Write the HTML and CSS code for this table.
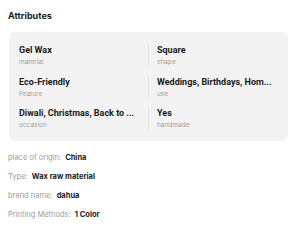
FILE: index.html
```html
<!DOCTYPE html>
<html lang="en">
<head>
    <meta charset="UTF-8">
    <meta name="viewport" content="width=device-width, initial-scale=1.0">
    <title>Attributes</title>
    <link rel="stylesheet" href="styles.css">
</head>
<body>
    <h2 class="section-title">Attributes</h2>

    <div class="attr-card">
        <div class="attr-item">
            <div class="attr-value">Gel Wax</div>
            <div class="attr-name">material</div>
        </div>
        <div class="attr-item split">
            <div class="attr-value">Square</div>
            <div class="attr-name">shape</div>
        </div>
        <div class="attr-item">
            <div class="attr-value">Eco-Friendly</div>
            <div class="attr-name">Feature</div>
        </div>
        <div class="attr-item split">
            <div class="attr-value">Weddings, Birthdays, Hom...</div>
            <div class="attr-name">use</div>
        </div>
        <div class="attr-item">
            <div class="attr-value">Diwali, Christmas, Back to ...</div>
            <div class="attr-name">occasion</div>
        </div>
        <div class="attr-item split">
            <div class="attr-value">Yes</div>
            <div class="attr-name">handmade</div>
        </div>
    </div>

    <ul class="spec-list">
        <li><span class="spec-key">place of origin:</span> <span class="spec-val">China</span></li>
        <li><span class="spec-key">Type:</span> <span class="spec-val">Wax raw material</span></li>
        <li><span class="spec-key">brand name:</span> <span class="spec-val">dahua</span></li>
        <li><span class="spec-key">Printing Methods:</span> <span class="spec-val">1 Color</span></li>
    </ul>
</body>
</html>
```

FILE: styles.css
```css
body {
    font-family: Inter, "Noto Sans", sans-serif;
    margin: 0;
    padding: 10px 12px 0 8px;
    background-color: #fff;
    color: #1a1a1a;
}

.section-title {
    font-size: 9px;
    font-weight: 700;
    margin: 0 0 10px;
    line-height: 12px;
}

.attr-card {
    background-color: #f3f3f3;
    border-radius: 6px;
    padding: 12px 10px 12px 10px;
    display: grid;
    grid-template-columns: 119px 1fr;
    column-gap: 10px;
    row-gap: 9.5px;
    margin-left: 1px;
}

.attr-item {
    min-width: 0;
}

.attr-item.split {
    border-left: 1px solid #e4e4e4;
    padding-left: 8px;
}

/* values use a narrower face so long strings fit their column */
.attr-value {
    font-family: Roboto, "Noto Sans", sans-serif;
    font-size: 9px;
    font-weight: 700;
    line-height: 12px;
    white-space: nowrap;
}

.attr-name {
    font-size: 6.5px;
    color: #9d9d9d;
    line-height: 8px;
    margin-top: 2px;
}

.spec-list {
    list-style: none;
    margin: 10.5px 0 0;
    padding: 0;
}

.spec-list li {
    font-size: 7.5px;
    line-height: 11px;
    margin-bottom: 8px;
}

.spec-key {
    color: #9d9d9d;
    margin-right: 2px;
}

.spec-val {
    font-weight: 700;
    color: #1a1a1a;
}
```
